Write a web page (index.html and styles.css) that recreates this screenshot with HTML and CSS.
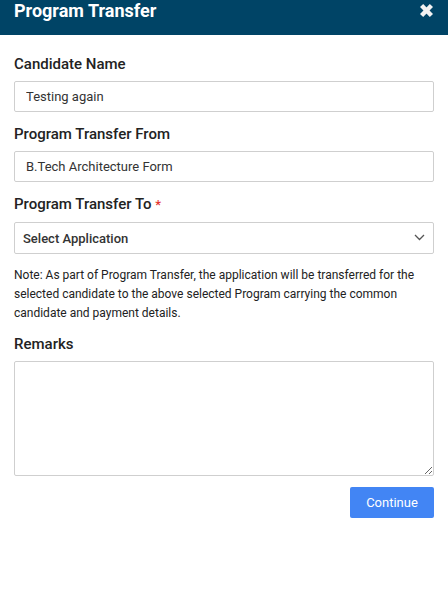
FILE: index.html
```html
<!DOCTYPE html>
<html>
<head>
<meta charset="utf-8">
<title>Program Transfer</title>
<link rel="stylesheet" href="styles.css">
</head>
<body>
<div class="modal">
    <div class="modal-head">
        <h2 class="modal-title">Program Transfer</h2>
        <span class="modal-close">
            <svg width="15" height="15" viewBox="0 0 15 15">
                <line x1="2.6" y1="2.4" x2="12.4" y2="12.6" />
                <line x1="12.4" y1="2.4" x2="2.6" y2="12.6" />
            </svg>
        </span>
    </div>
    <form class="modal-body">
        <div class="field">
            <label class="field-label">Candidate Name</label>
            <input class="form-control" type="text" value="Testing again" />
        </div>
        <div class="field">
            <label class="field-label">Program Transfer From</label>
            <input class="form-control" type="text" value="B.Tech Architecture Form" />
        </div>
        <div class="field">
            <label class="field-label">Program Transfer To <span class="req">*</span></label>
            <div class="select-wrap">
                <select class="form-control form-select">
                    <option>Select Application</option>
                </select>
                <svg class="select-arrow" width="11" height="7" viewBox="0 0 11 7">
                    <polyline points="1,1 5.5,5.5 10,1" />
                </svg>
            </div>
        </div>
        <p class="note">Note: As part of Program Transfer, the application will be transferred for the selected candidate to the above selected Program carrying the common candidate and payment details.</p>
        <div class="field field-remarks">
            <label class="field-label">Remarks</label>
            <textarea class="form-control form-text"></textarea>
        </div>
        <div class="actions">
            <button type="button" class="btn-primary">Continue</button>
        </div>
    </form>
</div>
</body>
</html>
```

FILE: styles.css
```css
*{
    box-sizing: border-box;
}
body{
    margin: 0;
    font-family: Roboto, "Liberation Sans", Arial, sans-serif;
    color: #222;
    background: #fff;
}
.modal{
    width: 448px;
}
.modal-head{
    height: 35px;
    background: #004466;
    display: flex;
    justify-content: space-between;
    align-items: flex-start;
    padding: 0 14px 0 14px;
}
.modal-title{
    margin: 0;
    font-size: 18px;
    line-height: 21px;
    font-weight: 700;
    color: #fff;
}
.modal-close{
    display: block;
    padding-top: 3px;
}
.modal-close svg{
    display: block;
}
.modal-close line{
    stroke: #f2f2f2;
    stroke-width: 4.4;
}
.modal-body{
    padding: 19px 14px 0 14px;
}
.field{
    margin-bottom: 12px;
}
.field-label{
    display: block;
    font-size: 15px;
    line-height: 20px;
    font-weight: 500;
    color: #222;
    margin-bottom: 7px;
}
.req{
    color: #e3342f;
    font-size: 13px;
}
.form-control{
    display: block;
    width: 100%;
    height: 31px;
    border: 1px solid #cfcfcf;
    border-radius: 2px;
    padding: 0 11px;
    font-family: Roboto, "Liberation Sans", Arial, sans-serif;
    font-size: 13px;
    color: #333;
    background: #fff;
    outline: none;
}
.select-wrap{
    position: relative;
}
.form-select{
    height: 32px;
    padding: 0 8px;
    font-weight: 500;
    -webkit-appearance: none;
    appearance: none;
}
.select-arrow{
    position: absolute;
    right: 9px;
    top: 12px;
}
.select-arrow polyline{
    fill: none;
    stroke: #555;
    stroke-width: 1.3;
}
.note{
    margin: 10px 0 10px 0;
    font-size: 12px;
    line-height: 19.2px;
    color: #222;
}
.field-remarks .field-label{
    margin-bottom: 7.5px;
}
.form-text{
    height: 115px;
    padding: 8px 11px;
    resize: both;
}
.field-remarks{
    margin-bottom: 11px;
}
.actions{
    display: flex;
    justify-content: flex-end;
}
.btn-primary{
    width: 84px;
    height: 31px;
    border: 0;
    border-radius: 2px;
    background: #4285f4;
    color: #fff;
    font-family: Roboto, "Liberation Sans", Arial, sans-serif;
    font-size: 13px;
    padding: 0;
}
```
